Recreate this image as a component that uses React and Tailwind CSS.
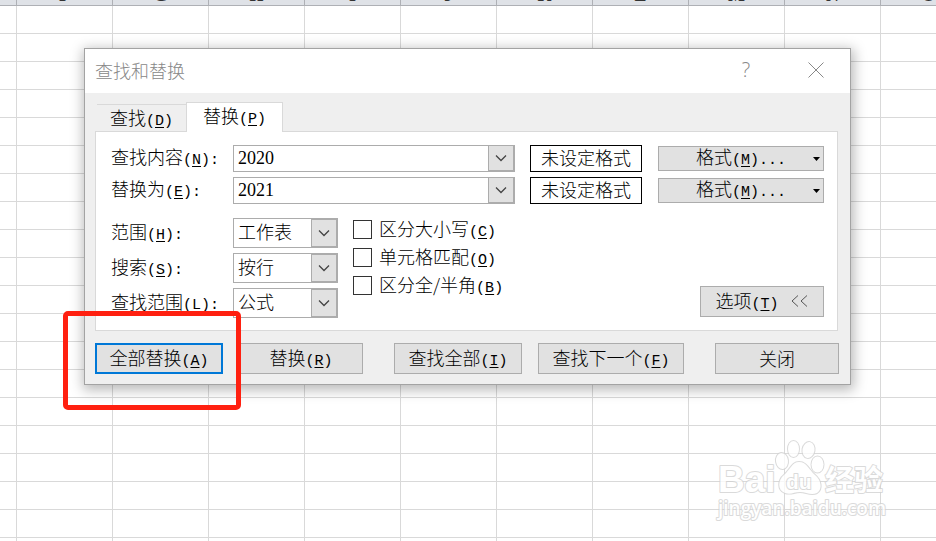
import React from 'react';

const columns = 'FGHIJKLMNOPQRSTUVWXYZ'.split('');
const rows = Array.from({ length: 40 }, (_, i) => i);

const Key = ({ k, after = '' }) => (
  <span className="whitespace-pre font-['Liberation_Mono',monospace] text-[15px] leading-4">
    (<u className="decoration-1 underline-offset-2">{k}</u>){after}
  </span>
);

const Chevron = () => (
  <svg className="h-2 w-3" viewBox="0 0 12 8" fill="none" stroke="#444" strokeWidth="1.3">
    <path d="M1 1.5 L6 6.5 L11 1.5" />
  </svg>
);

const Sheet = () => (
  <table className="w-[2033px] table-fixed border-separate border-spacing-0">
    <colgroup>
      <col className="w-[17px]" />
      {columns.map((c) => (
        <col key={c} className="w-24" />
      ))}
    </colgroup>
    <thead>
      <tr className="bg-[#dfe2e7]">
        <th className="border-r border-b border-[#aeb0b5] p-0"></th>
        {columns.map((c) => (
          <th key={c} className="border-r border-b border-[#aeb0b5] p-0">
            <div className="flex h-[5px] items-end justify-center overflow-hidden font-['Liberation_Serif',serif] text-lg leading-5 font-bold text-[#333]">
              {c}
            </div>
          </th>
        ))}
      </tr>
    </thead>
    <tbody>
      {rows.map((r) => (
        <tr key={r} className="h-7">
          <td className="border-r border-b border-[#d9d9d9] p-0"></td>
          {columns.map((c) => (
            <td key={c} className="border-r border-b border-[#d9d9d9] p-0"></td>
          ))}
        </tr>
      ))}
    </tbody>
  </table>
);

const SearchRow = ({ id, label, k, value }) => (
  <div className="flex h-[27px] items-center">
    <label htmlFor={id} className="w-[123px] shrink-0 pb-1 pl-px">
      {label}
      <Key k={k} after=":" />
    </label>
    <div className="flex h-[27px] min-w-0 flex-1 border border-[#acacac] bg-white">
      <input
        id={id}
        defaultValue={value}
        className="min-w-0 flex-1 px-1 pb-0.5 font-['Liberation_Serif',serif] text-lg leading-5 font-normal outline-none"
      />
      <button
        type="button"
        aria-label={label}
        className="flex w-[26px] items-center justify-center border-r border-b border-l border-[#acacac] bg-[#e1e1e1]"
      >
        <Chevron />
      </button>
    </div>
    <output className="ml-[15px] flex h-[27px] w-28 items-center justify-center border border-black bg-white pb-1">
      未设定格式
    </output>
    <button
      type="button"
      className="relative ml-4 flex h-[25px] w-[166px] items-center justify-center border border-[#acacac] bg-[#e1e1e1] pb-1"
    >
      <span>
        格式
        <Key k="M" after="..." />
      </span>
      <svg className="absolute top-[10px] right-[3px] h-1 w-[7px]" viewBox="0 0 7 4">
        <path d="M0 0 H7 L3.5 4 Z" fill="#000" />
      </svg>
    </button>
  </div>
);

const SelectRow = ({ id, label, k, value }) => (
  <div className="flex h-[30px] items-center">
    <label htmlFor={id} className="w-[123px] shrink-0 pb-1 pl-px">
      {label}
      <Key k={k} after=":" />
    </label>
    <div className="relative h-[30px] w-[105px]">
      <select id={id} className="h-full w-full appearance-none border border-[#acacac] bg-white px-1 pb-1 leading-6">
        <option>{value}</option>
      </select>
      <span className="pointer-events-none absolute inset-y-0 right-0 flex w-[27px] items-center justify-center border-2 border-l border-[#acacac] bg-[#e1e1e1]">
        <Chevron />
      </span>
    </div>
  </div>
);

const CheckRow = ({ label, k }) => (
  <label className="flex h-5 items-center gap-[7px]">
    <input type="checkbox" className="h-[19px] w-[19px] appearance-none border border-[#333] bg-white" />
    <span className="leading-5">
      {label}
      <Key k={k} />
    </span>
  </label>
);

const Action = ({ width, label, k, more, primary }) => (
  <button
    type="button"
    className={`flex h-[31px] items-center justify-center bg-[#e1e1e1] pb-0.5 ${width} ${
      primary ? 'border-2 border-[#0078d7]' : 'border border-[#acacac]'
    }`}
  >
    <span>
      {label}
      {k && <Key k={k} />}
    </span>
    {more && (
      <svg className="ml-3 h-3 w-[18px]" viewBox="0 0 18 12" fill="none" stroke="#555" strokeWidth="1">
        <path d="M7 0.5 L1 6 L7 11.5 M16 0.5 L10 6 L16 11.5" />
      </svg>
    )}
  </button>
);

const Dialog = () => (
  <div
    role="dialog"
    aria-labelledby="title"
    className="absolute top-12 left-[84px] w-[767px] border border-[#a3a3a3] bg-[#efefef] shadow-[1px_3px_12px_2px_rgba(0,0,0,0.28)]"
  >
    <div className="flex h-11 items-center bg-white pr-[26px] pb-0.5 pl-[10px] text-[#888]">
      <h1 id="title" className="flex-1">查找和替换</h1>
      <button type="button" className="mr-[54px] w-4 font-['Open_Sans',sans-serif] text-xl">?</button>
      <button type="button" aria-label="关闭">
        <svg className="h-4 w-4" viewBox="0 0 16 16" stroke="#888" strokeWidth="1">
          <path d="M0.5 0.5 L15.5 15.5 M15.5 0.5 L0.5 15.5" />
        </svg>
      </button>
    </div>
    <div className="pt-[9px] pr-[11px] pb-[10px] pl-[10px]">
      <div role="tablist" className="relative ml-[2px] flex items-end">
        <button type="button" role="tab" aria-selected="false" className="h-[27px] w-[89px] border-t border-[#d9d9d9] pb-0.5">
          查找
          <Key k="D" />
        </button>
        <button
          type="button"
          role="tab"
          aria-selected="true"
          className="-mb-px h-[30px] w-[97px] border border-b-0 border-[#d9d9d9] bg-white pb-1"
        >
          替换
          <Key k="P" />
        </button>
      </div>
      <div className="mr-px border border-[#d9d9d9] bg-white pt-[13px] pr-[13px] pb-3 pl-[14px]">
        <div className="flex flex-col gap-[5px]">
          <SearchRow id="find" label="查找内容" k="N" value="2020" />
          <SearchRow id="replace" label="替换为" k="E" value="2021" />
        </div>
        <div className="mt-[14px] flex">
          <div className="flex flex-col gap-[5px]">
            <SelectRow id="within" label="范围" k="H" value="工作表" />
            <SelectRow id="search" label="搜索" k="S" value="按行" />
            <SelectRow id="lookin" label="查找范围" k="L" value="公式" />
          </div>
          <div className="ml-[15px] flex flex-1 flex-col gap-2 pt-px">
            <CheckRow label="区分大小写" k="C" />
            <CheckRow label="单元格匹配" k="O" />
            <CheckRow label="区分全/半角" k="B" />
          </div>
          <div className="self-end pb-px">
            <Action width="w-[124px]" label="选项" k="T" more />
          </div>
        </div>
      </div>
      <div className="mt-3 flex justify-between">
        <div className="flex gap-4">
          <Action width="w-32" label="全部替换" k="A" primary />
          <Action width="w-[124px]" label="替换" k="R" />
        </div>
        <div className="flex gap-4">
          <Action width="w-32" label="查找全部" k="I" />
          <Action width="w-[146px]" label="查找下一个" k="F" />
        </div>
        <Action width="w-[124px]" label="关闭" />
      </div>
    </div>
  </div>
);

const Watermark = () => (
  <svg
    className="absolute top-[436px] left-[712px] h-[90px] w-[180px] opacity-80"
    viewBox="0 0 180 90"
    fill="#fff"
    stroke="#d2d2d2"
    strokeWidth="2"
    strokeLinejoin="round"
    paintOrder="stroke"
    fontWeight="700"
  >
    <text x="6" y="56" fontSize="37" fontFamily="Liberation Sans, sans-serif">Bai</text>
    <ellipse cx="70" cy="25" rx="6" ry="8" transform="rotate(-8 70 25)" />
    <ellipse cx="81.5" cy="13" rx="5.5" ry="8" />
    <ellipse cx="96.5" cy="14" rx="6" ry="8" transform="rotate(10 96.5 14)" />
    <ellipse cx="105.5" cy="28.5" rx="6" ry="8" />
    <path d="M87 26 C80 26 78 34 72 39 C66 44 65 54 73 57 C79 59 82 56 88 56 C94 56 99 60 105 57 C111 53 109 44 103 39 C97 34 95 26 87 26 Z" />
    <text x="74" y="53" fontSize="21" fontFamily="Liberation Sans, sans-serif">du</text>
    <text x="113" y="55" fontSize="29" fontFamily="Noto Sans CJK SC, sans-serif">经验</text>
    <text x="6" y="79" fontSize="19" fontWeight="600" fontFamily="Open Sans, sans-serif">jingyan.baidu.com</text>
  </svg>
);

export default function App() {
  return (
    <main className="relative h-screen overflow-hidden bg-white font-['Noto_Sans_CJK_SC',sans-serif] text-lg leading-6 font-light text-black">
      <Sheet />
      <Dialog />
      <div className="pointer-events-none absolute top-[311px] left-[63px] h-[99px] w-[178px] rounded-[5px] border-[5px] border-[#ff2010]"></div>
      <Watermark />
    </main>
  );
}
